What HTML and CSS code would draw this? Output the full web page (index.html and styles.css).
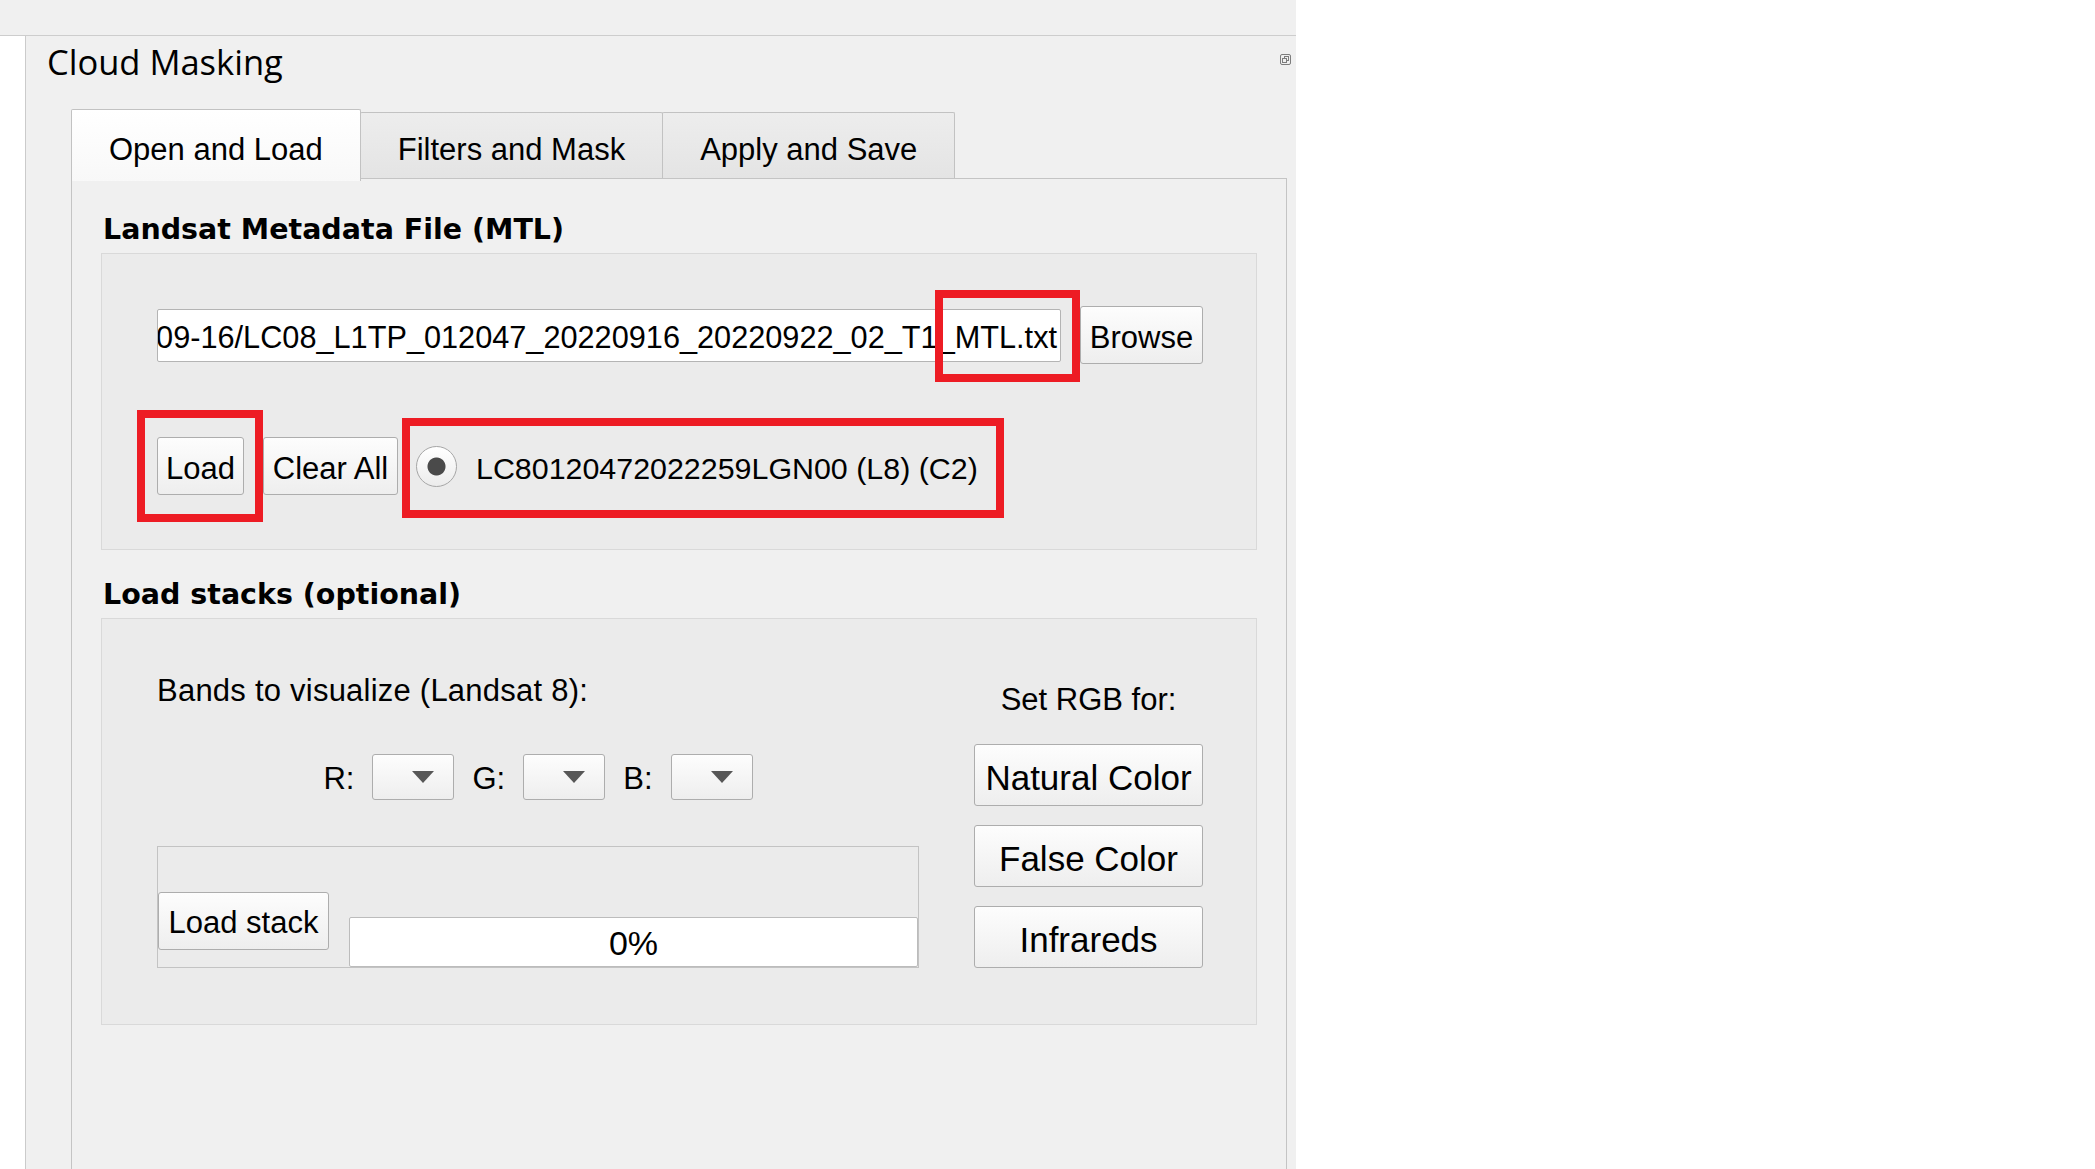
FILE: index.html
```html
<!DOCTYPE html>
<html>
<head>
<meta charset="utf-8">
<title>Cloud Masking</title>
<link rel="stylesheet" href="styles.css">
</head>
<body>
<div class="app">
  <div class="topbar"></div>
  <div class="main">
    <div class="sidestrip"></div>
    <div class="dock">
      <div class="dock-title">
        <span class="dock-name">Cloud Masking</span>
        <svg class="float-icon" width="12" height="12" viewBox="0 0 12 12">
          <rect x="0.5" y="0.5" width="10" height="10" rx="1.5" fill="none" stroke="#7d7d7d"/>
          <rect x="4.5" y="2.5" width="4" height="4" fill="none" stroke="#7d7d7d"/>
          <rect x="2.5" y="4.5" width="4" height="4" fill="#f0f0f0" stroke="#7d7d7d"/>
        </svg>
      </div>
      <div class="tabwidget">
        <div class="tabbar">
          <div class="tab active">Open and Load</div>
          <div class="tab">Filters and Mask</div>
          <div class="tab">Apply and Save</div>
        </div>
        <div class="pane">
          <div class="section-title">Landsat Metadata File (MTL)</div>
          <div class="group group-mtl">
            <div class="row-file">
              <div class="lineedit"><span class="lineedit-text">09-16/LC08_L1TP_012047_20220916_20220922_02_T1_MTL.txt</span></div>
              <div class="btn btn-browse">Browse</div>
            </div>
            <div class="row-load">
              <div class="btn btn-load">Load</div>
              <div class="btn btn-clear">Clear All</div>
              <div class="radio"><span class="radio-dot"></span><span class="radio-label">LC80120472022259LGN00 (L8) (C2)</span></div>
            </div>
            <div class="mark mark-mtl"></div>
            <div class="mark mark-load"></div>
            <div class="mark mark-radio"></div>
          </div>
          <div class="section-title second">Load stacks (optional)</div>
          <div class="group group-stacks">
            <div class="col-left">
              <div class="label label-bands">Bands to visualize (Landsat 8):</div>
              <div class="rgb-row">
                <span class="rgb-label">R:</span><div class="combo"></div>
                <span class="rgb-label">G:</span><div class="combo"></div>
                <span class="rgb-label">B:</span><div class="combo"></div>
              </div>
              <div class="stack-frame">
                <div class="btn btn-stack">Load stack</div>
                <div class="progress">0%</div>
              </div>
            </div>
            <div class="col-right">
              <div class="label label-center">Set RGB for:</div>
              <div class="btn btn-rgb first">Natural Color</div>
              <div class="btn btn-rgb">False Color</div>
              <div class="btn btn-rgb">Infrareds</div>
            </div>
          </div>
        </div>
      </div>
    </div>
  </div>
</div>
</body>
</html>
```

FILE: styles.css
```css
* { box-sizing: border-box; }
html, body { margin: 0; padding: 0; background: #ffffff; }
body {
  font-family: "Liberation Sans", Arial, sans-serif;
  font-size: 31px;
  color: #000;
}
.app {
  width: 1296px;
  height: 1169px;
  display: flex;
  flex-direction: column;
  background: #f0f0f0;
  overflow: hidden;
}
.topbar {
  height: 36px;
  flex: none;
  border-bottom: 1px solid #cdcdcd;
}
.main {
  flex: 1;
  display: flex;
  min-height: 0;
  min-width: 0;
}
.sidestrip {
  width: 26px;
  flex: none;
  background: #ffffff;
  border-right: 1px solid #cbcbcb;
}
.dock {
  flex: 1;
  display: flex;
  flex-direction: column;
  background: #f0f0f0;
  min-height: 0;
  min-width: 0;
}
.dock-title {
  height: 48px;
  margin-top: 2px;
  margin-bottom: 23px;
  display: flex;
  justify-content: space-between;
  padding: 0 4px 0 21px;
  flex: none;
}
.dock-name {
  font-family: "Open Sans", "Noto Sans", sans-serif;
  font-size: 34.5px;
  line-height: 48px;
}
.float-icon {
  margin-top: 16px;
  flex: none;
}
.tabwidget {
  flex: 1;
  display: flex;
  flex-direction: column;
  margin: 0 9px 0 45px;
  min-height: 0;
  min-width: 0;
}
.tabbar {
  display: flex;
  align-items: flex-end;
  flex: none;
}
.tab {
  border: 1px solid #c2c2c2;
  border-bottom: none;
  padding: 19px 37px 10px;
  line-height: 36px;
  background: linear-gradient(#ededed, #e4e4e4);
  white-space: nowrap;
  margin-left: -1px;
  border-radius: 2px 2px 0 0;
}
.tab.active {
  margin-left: 0;
  background: linear-gradient(#ffffff, #f8f8f8);
  padding-top: 22px;
  padding-bottom: 13px;
  margin-bottom: -3px;
  position: relative;
  z-index: 1;
}
.pane {
  flex: 1;
  min-width: 0;
  border: 1px solid #c4c4c4;
  border-bottom: none;
  background: #f0f0f0;
  padding: 33px 29px 0;
}
.section-title {
  font-family: "DejaVu Sans", Verdana, sans-serif;
  font-weight: bold;
  font-size: 28.5px;
  line-height: 36px;
  padding-left: 2px;
  margin-bottom: 5px;
  white-space: nowrap;
}
.section-title.second {
  margin-top: 27px;
}
.group {
  position: relative;
  border: 1px solid #d9d9d9;
  background: #ebebeb;
  min-width: 0;
}
.group-mtl {
  padding: 52px 53px 54px 55px;
}
.row-file {
  display: flex;
  align-items: center;
  gap: 19px;
  height: 58px;
  min-width: 0;
}
.lineedit {
  flex: 1;
  min-width: 0;
  height: 53px;
  background: #ffffff;
  border: 1px solid #b4b4b4;
  border-radius: 2px;
  overflow: hidden;
  display: flex;
  justify-content: flex-end;
  align-items: center;
  padding: 6px 3px 0 0;
  white-space: nowrap;
  line-height: 36px;
  font-size: 30.7px;
}
.lineedit-text {
  flex: none;
}
.btn {
  display: flex;
  align-items: center;
  justify-content: center;
  height: 58px;
  padding-top: 5px;
  border: 1px solid #adadad;
  border-radius: 3px;
  background: linear-gradient(#fdfdfd, #eeeeee);
  line-height: 36px;
  white-space: nowrap;
  flex: none;
}
.btn-browse { width: 123px; }
.row-load {
  display: flex;
  align-items: center;
  height: 58px;
  margin-top: 73px;
}
.btn-load { width: 87px; }
.btn-clear { width: 135px; margin-left: 19px; }
.radio {
  display: flex;
  align-items: center;
  gap: 19px;
  margin-left: 18px;
}
.radio-dot {
  width: 41px;
  height: 41px;
  border-radius: 50%;
  border: 1px solid #a6a6a6;
  background:
    radial-gradient(circle at center, #4a4a4a 0, #4a4a4a 8.5px, rgba(74,74,74,0) 9.5px),
    linear-gradient(#ffffff, #ececec);
  flex: none;
}
.radio-label {
  font-size: 30.4px;
  line-height: 36px;
  padding-top: 3px;
  white-space: nowrap;
}
.mark {
  position: absolute;
  border: 8px solid #ed1c24;
}
.mark-mtl { left: 833px; top: 36px; width: 145px; height: 92px; }
.mark-load { left: 35px; top: 156px; width: 126px; height: 112px; }
.mark-radio { left: 300px; top: 164px; width: 602px; height: 100px; }

.group-stacks {
  display: flex;
  gap: 55px;
  padding: 54px 53px 56px 55px;
}
.col-left {
  flex: 1;
  min-width: 0;
  display: flex;
  flex-direction: column;
}
.label {
  line-height: 36px;
  white-space: nowrap;
}
.label-bands {
  letter-spacing: 0.23px;
}
.label-center { text-align: center; }
.rgb-row {
  display: flex;
  align-items: center;
  justify-content: center;
  gap: 18px;
  height: 46px;
  margin-top: 45px;
}
.rgb-label {
  line-height: 36px;
  padding-top: 3px;
}
.combo {
  position: relative;
  width: 82px;
  height: 46px;
  border: 1px solid #adadad;
  border-radius: 3px;
  background: linear-gradient(#fdfdfd, #eeeeee);
}
.combo::after {
  content: "";
  position: absolute;
  right: 19px;
  top: 16px;
  border-left: 11px solid transparent;
  border-right: 11px solid transparent;
  border-top: 12px solid #575757;
}
.stack-frame {
  margin-top: 46px;
  height: 122px;
  border: 1px solid #c3c3c3;
  display: flex;
  align-items: flex-end;
}
.btn-stack {
  width: 171px;
  margin-bottom: 17px;
  padding-top: 3px;
}
.progress {
  flex: 1;
  margin-left: 20px;
  height: 50px;
  background: #ffffff;
  border: 1px solid #bcbcbc;
  border-radius: 2px;
  display: flex;
  align-items: center;
  justify-content: center;
  padding-top: 1px;
  font-size: 34px;
  line-height: 40px;
}
.col-right {
  width: 229px;
  flex: none;
  display: flex;
  flex-direction: column;
  padding-top: 9px;
}
.btn-rgb {
  height: 62px;
  font-size: 35px;
  margin-top: 19px;
}
.btn-rgb.first {
  margin-top: 26px;
}
```
